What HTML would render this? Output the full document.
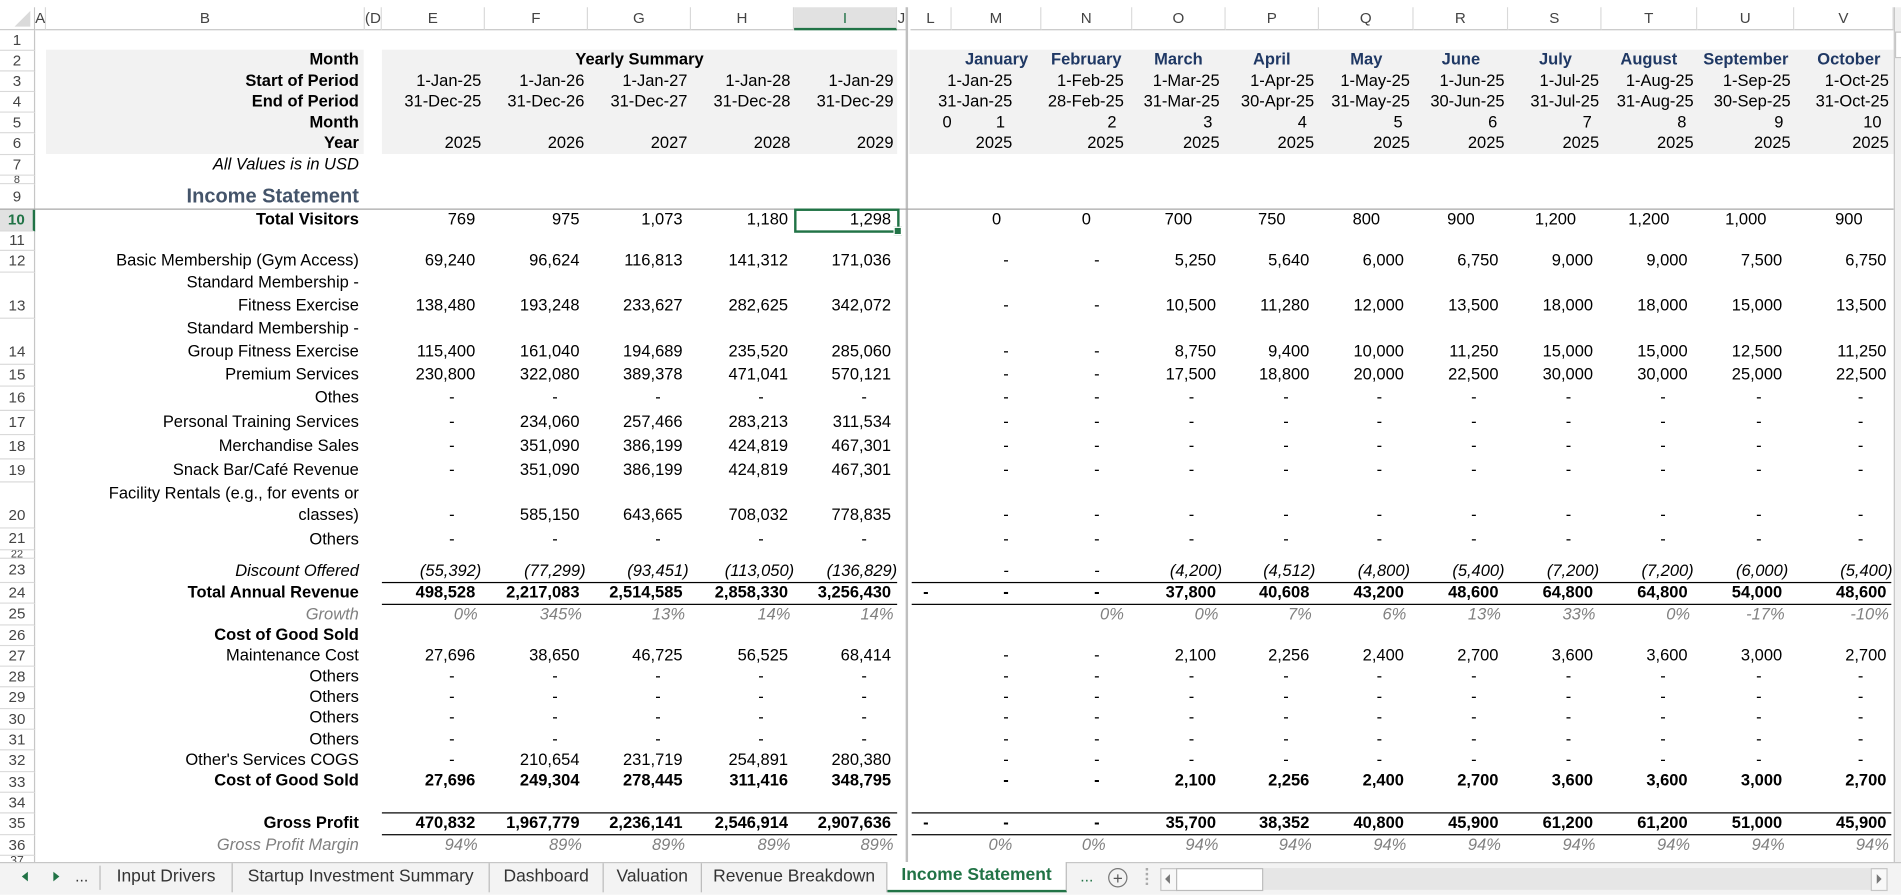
<!DOCTYPE html>
<html><head><meta charset="utf-8">
<style>
html,body{margin:0;padding:0;background:#fff;width:1901px;height:893px;overflow:hidden}
#w{position:absolute;left:0;top:0;width:1568px;height:737px;transform:scale(1.21237);transform-origin:0 0;font-family:"Liberation Sans",Arial,sans-serif;font-size:12px;color:#000}
.a{position:absolute}
.r{position:absolute;left:0;width:1568px;height:17px;font-size:13.6px}
.r span{position:absolute;left:0;top:0;text-align:right;white-space:nowrap;line-height:17px}
.b{font-weight:bold}.it{font-style:italic}.gy{color:#808080}
.nv{color:#1f3864;font-weight:bold}
.cB{width:296px}
.cE{width:392px}.cF{width:478px}.cG{width:563px}.cH{width:650px}.cI{width:735px}
.dE{width:375px}.dF{width:460px}.dG{width:545px}.dH{width:630px}.dI{width:715px}
.cO{width:1003px}.cP{width:1080px}.cQ{width:1158px}.cR{width:1236px}.cS{width:1314px}.cT{width:1392px}.cU{width:1470px}.cV{width:1556px}
.dL{width:766px}.dM{width:832px}.dN{width:907px}.dO{width:985px}.dP{width:1063px}.dQ{width:1140px}.dR{width:1218px}.dS{width:1296px}.dT{width:1374px}.dU{width:1453px}.dV{width:1537px}
.tE{width:397px}.tF{width:482px}.tG{width:567px}.tH{width:652px}.tI{width:737px}
.tM{width:835px}.tN{width:927px}.tO{width:1006px}.tP{width:1084px}.tQ{width:1163px}.tR{width:1241px}.tS{width:1319px}.tT{width:1397px}.tU{width:1477px}.tV{width:1558px}
.r span.ct{text-align:center;width:90px}
.pp{transform:translateX(5px)}.pc{transform:translateX(2px)}.mn{transform:translateX(-6px)}
.rh{position:absolute;left:0;width:28px;border-bottom:1px solid #d9d9d9;border-right:1px solid #c6c6c6;text-align:center;color:#444;font-size:12.5px;background:#fff;overflow:hidden}
.ch{position:absolute;top:6px;height:18px;line-height:18px;text-align:center;color:#444;border-right:1px solid #d9d9d9;font-size:12.5px;border-bottom:1px solid #c6c6c6;background:#fff}
.tab{position:absolute;top:712px;height:24px;line-height:22px;font-size:14.4px;color:#333;border-right:1px solid #bbb;text-align:center;white-space:nowrap}
</style></head><body><div id="w">

<div class="a" style="left:38px;top:41px;width:262px;height:86px;background:#f2f2f2"></div>
<div class="a" style="left:315px;top:41px;width:425px;height:86px;background:#f2f2f2"></div>
<div class="a" style="left:750px;top:41px;width:812px;height:86px;background:#f2f2f2"></div>

<div class="a" style="left:0;top:6px;width:28px;height:18px;border-right:1px solid #c6c6c6;border-bottom:1px solid #c6c6c6"></div>
<div class="a" style="left:12px;top:9px;width:0;height:0;border-left:13px solid transparent;border-bottom:13px solid #dadada"></div>
<div class="ch" style="left:29px;width:8px">A</div>
<div class="ch" style="left:38px;width:262px">B</div>
<div class="ch" style="left:301px;width:13px">(D</div>
<div class="ch" style="left:315px;width:84px">E</div>
<div class="ch" style="left:400px;width:84px">F</div>
<div class="ch" style="left:485px;width:84px">G</div>
<div class="ch" style="left:570px;width:84px">H</div>
<div class="ch" style="left:655px;width:84px;background:#e1e1e1;color:#217346;border-bottom:2px solid #217346;height:17px">I</div>
<div class="ch" style="left:740px;width:7px">J</div>
<div class="ch" style="left:751px;width:33px">L</div>
<div class="ch" style="left:785px;width:73px">M</div>
<div class="ch" style="left:859px;width:74px">N</div>
<div class="ch" style="left:934px;width:76px">O</div>
<div class="ch" style="left:1011px;width:76px">P</div>
<div class="ch" style="left:1088px;width:77px">Q</div>
<div class="ch" style="left:1166px;width:77px">R</div>
<div class="ch" style="left:1244px;width:76px">S</div>
<div class="ch" style="left:1321px;width:78px">T</div>
<div class="ch" style="left:1400px;width:79px">U</div>
<div class="ch" style="left:1480px;width:81px">V</div>

<div class="rh" style="top:25px;height:16px;line-height:16px">1</div>
<div class="rh" style="top:42px;height:16px;line-height:16px">2</div>
<div class="rh" style="top:59px;height:16px;line-height:16px">3</div>
<div class="rh" style="top:76px;height:16px;line-height:16px">4</div>
<div class="rh" style="top:93px;height:16px;line-height:16px">5</div>
<div class="rh" style="top:110px;height:17px;line-height:17px">6</div>
<div class="rh" style="top:128px;height:16px;line-height:16px">7</div>
<div class="rh" style="top:145px;height:6px;line-height:6px;font-size:9px">8</div>
<div class="rh" style="top:152px;height:20px;line-height:20px">9</div>
<div class="rh" style="top:173px;height:17px;line-height:17px;background:#e1e1e1;color:#217346;font-weight:bold;border-right:2px solid #217346;width:27px">10</div>
<div class="rh" style="top:191px;height:15px;line-height:15px">11</div>
<div class="rh" style="top:207px;height:17px;line-height:17px">12</div>
<div class="rh" style="top:225px;height:37px;line-height:54px">13</div>
<div class="rh" style="top:263px;height:37px;line-height:54px">14</div>
<div class="rh" style="top:301px;height:17px;line-height:17px">15</div>
<div class="rh" style="top:319px;height:19px;line-height:19px">16</div>
<div class="rh" style="top:339px;height:19px;line-height:19px">17</div>
<div class="rh" style="top:359px;height:19px;line-height:19px">18</div>
<div class="rh" style="top:379px;height:18px;line-height:18px">19</div>
<div class="rh" style="top:398px;height:37px;line-height:54px">20</div>
<div class="rh" style="top:436px;height:17px;line-height:17px">21</div>
<div class="rh" style="top:454px;height:6px;line-height:6px;font-size:9px">22</div>
<div class="rh" style="top:461px;height:19px;line-height:19px">23</div>
<div class="rh" style="top:481px;height:16px;line-height:16px">24</div>
<div class="rh" style="top:498px;height:17px;line-height:17px">25</div>
<div class="rh" style="top:516px;height:16px;line-height:16px">26</div>
<div class="rh" style="top:533px;height:16px;line-height:16px">27</div>
<div class="rh" style="top:550px;height:16px;line-height:16px">28</div>
<div class="rh" style="top:567px;height:17px;line-height:17px">29</div>
<div class="rh" style="top:585px;height:16px;line-height:16px">30</div>
<div class="rh" style="top:602px;height:16px;line-height:16px">31</div>
<div class="rh" style="top:619px;height:17px;line-height:17px">32</div>
<div class="rh" style="top:637px;height:16px;line-height:16px">33</div>
<div class="rh" style="top:654px;height:16px;line-height:16px">34</div>
<div class="rh" style="top:671px;height:17px;line-height:17px">35</div>
<div class="rh" style="top:689px;height:16px;line-height:16px">36</div>
<div class="rh" style="top:706px;height:6px;line-height:10px;font-size:10px">37</div>

<div class="a" style="left:747px;top:6px;width:2px;height:706px;background:#bfbfbf"></div>
<div class="a" style="left:0;top:172px;width:1562px;height:1px;background:#a6a6a6"></div>
<div class="a" style="left:1562px;top:6px;width:6px;height:706px;background:#f0f0f0;border-left:1px solid #c6c6c6"></div>
<div class="a" style="left:1563px;top:26px;width:5px;height:20px;border:1px solid #c6c6c6;background:#fff"></div>

<div class="r" style="top:40px"><span class="cB b">Month</span><span class="b" style="left:315px;width:425px;text-align:center">Yearly Summary</span>
<span class="ct nv" style="left:777px">January</span><span class="ct nv" style="left:851px">February</span><span class="ct nv" style="left:927px">March</span><span class="ct nv" style="left:1004px">April</span><span class="ct nv" style="left:1082px">May</span><span class="ct nv" style="left:1160px">June</span><span class="ct nv" style="left:1238px">July</span><span class="ct nv" style="left:1315px">August</span><span class="ct nv" style="left:1395px">September</span><span class="ct nv" style="left:1480px">October</span></div>
<div class="r" style="top:58px"><span class="cB b">Start of Period</span><span class="tE">1-Jan-25</span><span class="tF">1-Jan-26</span><span class="tG">1-Jan-27</span><span class="tH">1-Jan-28</span><span class="tI">1-Jan-29</span>
<span class="tM">1-Jan-25</span><span class="tN">1-Feb-25</span><span class="tO">1-Mar-25</span><span class="tP">1-Apr-25</span><span class="tQ">1-May-25</span><span class="tR">1-Jun-25</span><span class="tS">1-Jul-25</span><span class="tT">1-Aug-25</span><span class="tU">1-Sep-25</span><span class="tV">1-Oct-25</span></div>
<div class="r" style="top:75px"><span class="cB b">End of Period</span><span class="tE">31-Dec-25</span><span class="tF">31-Dec-26</span><span class="tG">31-Dec-27</span><span class="tH">31-Dec-28</span><span class="tI">31-Dec-29</span>
<span class="tM">31-Jan-25</span><span class="tN">28-Feb-25</span><span class="tO">31-Mar-25</span><span class="tP">30-Apr-25</span><span class="tQ">31-May-25</span><span class="tR">30-Jun-25</span><span class="tS">31-Jul-25</span><span class="tT">31-Aug-25</span><span class="tU">30-Sep-25</span><span class="tV">31-Oct-25</span></div>
<div class="r" style="top:92px"><span class="cB b">Month</span><span style="width:785px">0</span>
<span class="tM mn">1</span><span class="tN mn">2</span><span class="tO mn">3</span><span class="tP mn">4</span><span class="tQ mn">5</span><span class="tR mn">6</span><span class="tS mn">7</span><span class="tT mn">8</span><span class="tU mn">9</span><span class="tV mn">10</span></div>
<div class="r" style="top:109px"><span class="cB b">Year</span><span class="tE">2025</span><span class="tF">2026</span><span class="tG">2027</span><span class="tH">2028</span><span class="tI">2029</span>
<span class="tM">2025</span><span class="tN">2025</span><span class="tO">2025</span><span class="tP">2025</span><span class="tQ">2025</span><span class="tR">2025</span><span class="tS">2025</span><span class="tT">2025</span><span class="tU">2025</span><span class="tV">2025</span></div>
<div class="r" style="top:127px"><span class="cB it">All Values is in USD</span></div>
<div class="r" style="top:152px;height:20px"><span class="cB b" style="font-size:16.5px;color:#44546a;line-height:20px">Income Statement</span></div>

<div class="a" style="left:655px;top:172px;width:83px;height:16px;border:2px solid #217346"></div>
<div class="a" style="left:737px;top:187px;width:5px;height:5px;background:#217346;border:1px solid #fff"></div>

<div class="r" style="top:172px"><span class="cB b">Total Visitors</span><span class="cE">769</span><span class="cF">975</span><span class="cG">1,073</span><span class="cH">1,180</span><span class="cI">1,298</span>
<span class="ct" style="left:777px">0</span><span class="ct" style="left:851px">0</span><span class="ct" style="left:927px">700</span><span class="ct" style="left:1004px">750</span><span class="ct" style="left:1082px">800</span><span class="ct" style="left:1160px">900</span><span class="ct" style="left:1238px">1,200</span><span class="ct" style="left:1315px">1,200</span><span class="ct" style="left:1395px">1,000</span><span class="ct" style="left:1480px">900</span></div>

<div class="r" style="top:206px"><span class="cB">Basic Membership (Gym Access)</span><span class="cE">69,240</span><span class="cF">96,624</span><span class="cG">116,813</span><span class="cH">141,312</span><span class="cI">171,036</span>
<span class="dM">-</span><span class="dN">-</span><span class="cO">5,250</span><span class="cP">5,640</span><span class="cQ">6,000</span><span class="cR">6,750</span><span class="cS">9,000</span><span class="cT">9,000</span><span class="cU">7,500</span><span class="cV">6,750</span></div>

<div class="r" style="top:224px"><span class="cB">Standard Membership -</span></div>
<div class="r" style="top:243px"><span class="cB">Fitness Exercise</span><span class="cE">138,480</span><span class="cF">193,248</span><span class="cG">233,627</span><span class="cH">282,625</span><span class="cI">342,072</span>
<span class="dM">-</span><span class="dN">-</span><span class="cO">10,500</span><span class="cP">11,280</span><span class="cQ">12,000</span><span class="cR">13,500</span><span class="cS">18,000</span><span class="cT">18,000</span><span class="cU">15,000</span><span class="cV">13,500</span></div>

<div class="r" style="top:262px"><span class="cB">Standard Membership -</span></div>
<div class="r" style="top:281px"><span class="cB">Group Fitness Exercise</span><span class="cE">115,400</span><span class="cF">161,040</span><span class="cG">194,689</span><span class="cH">235,520</span><span class="cI">285,060</span>
<span class="dM">-</span><span class="dN">-</span><span class="cO">8,750</span><span class="cP">9,400</span><span class="cQ">10,000</span><span class="cR">11,250</span><span class="cS">15,000</span><span class="cT">15,000</span><span class="cU">12,500</span><span class="cV">11,250</span></div>

<div class="r" style="top:300px"><span class="cB">Premium Services</span><span class="cE">230,800</span><span class="cF">322,080</span><span class="cG">389,378</span><span class="cH">471,041</span><span class="cI">570,121</span>
<span class="dM">-</span><span class="dN">-</span><span class="cO">17,500</span><span class="cP">18,800</span><span class="cQ">20,000</span><span class="cR">22,500</span><span class="cS">30,000</span><span class="cT">30,000</span><span class="cU">25,000</span><span class="cV">22,500</span></div>

<div class="r" style="top:319px"><span class="cB">Othes</span><span class="dE">-</span><span class="dF">-</span><span class="dG">-</span><span class="dH">-</span><span class="dI">-</span>
<span class="dM">-</span><span class="dN">-</span><span class="dO">-</span><span class="dP">-</span><span class="dQ">-</span><span class="dR">-</span><span class="dS">-</span><span class="dT">-</span><span class="dU">-</span><span class="dV">-</span></div>

<div class="r" style="top:339px"><span class="cB">Personal Training Services</span><span class="dE">-</span><span class="cF">234,060</span><span class="cG">257,466</span><span class="cH">283,213</span><span class="cI">311,534</span>
<span class="dM">-</span><span class="dN">-</span><span class="dO">-</span><span class="dP">-</span><span class="dQ">-</span><span class="dR">-</span><span class="dS">-</span><span class="dT">-</span><span class="dU">-</span><span class="dV">-</span></div>

<div class="r" style="top:359px"><span class="cB">Merchandise Sales</span><span class="dE">-</span><span class="cF">351,090</span><span class="cG">386,199</span><span class="cH">424,819</span><span class="cI">467,301</span>
<span class="dM">-</span><span class="dN">-</span><span class="dO">-</span><span class="dP">-</span><span class="dQ">-</span><span class="dR">-</span><span class="dS">-</span><span class="dT">-</span><span class="dU">-</span><span class="dV">-</span></div>

<div class="r" style="top:379px"><span class="cB">Snack Bar/Café Revenue</span><span class="dE">-</span><span class="cF">351,090</span><span class="cG">386,199</span><span class="cH">424,819</span><span class="cI">467,301</span>
<span class="dM">-</span><span class="dN">-</span><span class="dO">-</span><span class="dP">-</span><span class="dQ">-</span><span class="dR">-</span><span class="dS">-</span><span class="dT">-</span><span class="dU">-</span><span class="dV">-</span></div>

<div class="r" style="top:398px"><span class="cB">Facility Rentals (e.g., for events or</span></div>
<div class="r" style="top:416px"><span class="cB">classes)</span><span class="dE">-</span><span class="cF">585,150</span><span class="cG">643,665</span><span class="cH">708,032</span><span class="cI">778,835</span>
<span class="dM">-</span><span class="dN">-</span><span class="dO">-</span><span class="dP">-</span><span class="dQ">-</span><span class="dR">-</span><span class="dS">-</span><span class="dT">-</span><span class="dU">-</span><span class="dV">-</span></div>

<div class="r" style="top:436px"><span class="cB">Others</span><span class="dE">-</span><span class="dF">-</span><span class="dG">-</span><span class="dH">-</span><span class="dI">-</span>
<span class="dM">-</span><span class="dN">-</span><span class="dO">-</span><span class="dP">-</span><span class="dQ">-</span><span class="dR">-</span><span class="dS">-</span><span class="dT">-</span><span class="dU">-</span><span class="dV">-</span></div>

<div class="r it" style="top:462px"><span class="cB">Discount Offered</span><span class="cE pp">(55,392)</span><span class="cF pp">(77,299)</span><span class="cG pp">(93,451)</span><span class="cH pp">(113,050)</span><span class="cI pp">(136,829)</span>
<span class="dM">-</span><span class="dN">-</span><span class="cO pp">(4,200)</span><span class="cP pp">(4,512)</span><span class="cQ pp">(4,800)</span><span class="cR pp">(5,400)</span><span class="cS pp">(7,200)</span><span class="cT pp">(7,200)</span><span class="cU pp">(6,000)</span><span class="cV pp">(5,400)</span></div>

<div class="a" style="left:315px;top:480px;width:425px;height:17px;border-top:1px solid #000;border-bottom:1px solid #000"></div>
<div class="a" style="left:752px;top:480px;width:808px;height:17px;border-top:1px solid #000;border-bottom:1px solid #000"></div>
<div class="r b" style="top:480px"><span class="cB">Total Annual Revenue</span><span class="cE">498,528</span><span class="cF">2,217,083</span><span class="cG">2,514,585</span><span class="cH">2,858,330</span><span class="cI">3,256,430</span>
<span class="dL">-</span><span class="dM">-</span><span class="dN">-</span><span class="cO">37,800</span><span class="cP">40,608</span><span class="cQ">43,200</span><span class="cR">48,600</span><span class="cS">64,800</span><span class="cT">64,800</span><span class="cU">54,000</span><span class="cV">48,600</span></div>

<div class="r it gy" style="top:498px"><span class="cB">Growth</span><span class="cE pc">0%</span><span class="cF pc">345%</span><span class="cG pc">13%</span><span class="cH pc">14%</span><span class="cI pc">14%</span>
<span class="tN">0%</span><span class="cO pc">0%</span><span class="cP pc">7%</span><span class="cQ pc">6%</span><span class="cR pc">13%</span><span class="cS pc">33%</span><span class="cT pc">0%</span><span class="cU pc">-17%</span><span class="cV pc">-10%</span></div>

<div class="r b" style="top:515px"><span class="cB">Cost of Good Sold</span></div>

<div class="r" style="top:532px"><span class="cB">Maintenance Cost</span><span class="cE">27,696</span><span class="cF">38,650</span><span class="cG">46,725</span><span class="cH">56,525</span><span class="cI">68,414</span>
<span class="dM">-</span><span class="dN">-</span><span class="cO">2,100</span><span class="cP">2,256</span><span class="cQ">2,400</span><span class="cR">2,700</span><span class="cS">3,600</span><span class="cT">3,600</span><span class="cU">3,000</span><span class="cV">2,700</span></div>

<div class="r" style="top:549px"><span class="cB">Others</span><span class="dE">-</span><span class="dF">-</span><span class="dG">-</span><span class="dH">-</span><span class="dI">-</span>
<span class="dM">-</span><span class="dN">-</span><span class="dO">-</span><span class="dP">-</span><span class="dQ">-</span><span class="dR">-</span><span class="dS">-</span><span class="dT">-</span><span class="dU">-</span><span class="dV">-</span></div>
<div class="r" style="top:566px"><span class="cB">Others</span><span class="dE">-</span><span class="dF">-</span><span class="dG">-</span><span class="dH">-</span><span class="dI">-</span>
<span class="dM">-</span><span class="dN">-</span><span class="dO">-</span><span class="dP">-</span><span class="dQ">-</span><span class="dR">-</span><span class="dS">-</span><span class="dT">-</span><span class="dU">-</span><span class="dV">-</span></div>
<div class="r" style="top:583px"><span class="cB">Others</span><span class="dE">-</span><span class="dF">-</span><span class="dG">-</span><span class="dH">-</span><span class="dI">-</span>
<span class="dM">-</span><span class="dN">-</span><span class="dO">-</span><span class="dP">-</span><span class="dQ">-</span><span class="dR">-</span><span class="dS">-</span><span class="dT">-</span><span class="dU">-</span><span class="dV">-</span></div>
<div class="r" style="top:601px"><span class="cB">Others</span><span class="dE">-</span><span class="dF">-</span><span class="dG">-</span><span class="dH">-</span><span class="dI">-</span>
<span class="dM">-</span><span class="dN">-</span><span class="dO">-</span><span class="dP">-</span><span class="dQ">-</span><span class="dR">-</span><span class="dS">-</span><span class="dT">-</span><span class="dU">-</span><span class="dV">-</span></div>

<div class="r" style="top:618px"><span class="cB">Other's Services COGS</span><span class="dE">-</span><span class="cF">210,654</span><span class="cG">231,719</span><span class="cH">254,891</span><span class="cI">280,380</span>
<span class="dM">-</span><span class="dN">-</span><span class="dO">-</span><span class="dP">-</span><span class="dQ">-</span><span class="dR">-</span><span class="dS">-</span><span class="dT">-</span><span class="dU">-</span><span class="dV">-</span></div>

<div class="r b" style="top:635px"><span class="cB">Cost of Good Sold</span><span class="cE">27,696</span><span class="cF">249,304</span><span class="cG">278,445</span><span class="cH">311,416</span><span class="cI">348,795</span>
<span class="dM">-</span><span class="dN">-</span><span class="cO">2,100</span><span class="cP">2,256</span><span class="cQ">2,400</span><span class="cR">2,700</span><span class="cS">3,600</span><span class="cT">3,600</span><span class="cU">3,000</span><span class="cV">2,700</span></div>

<div class="a" style="left:315px;top:670px;width:425px;height:17px;border-top:1px solid #000;border-bottom:1px solid #000"></div>
<div class="a" style="left:752px;top:670px;width:808px;height:17px;border-top:1px solid #000;border-bottom:1px solid #000"></div>
<div class="r b" style="top:670px"><span class="cB">Gross Profit</span><span class="cE">470,832</span><span class="cF">1,967,779</span><span class="cG">2,236,141</span><span class="cH">2,546,914</span><span class="cI">2,907,636</span>
<span class="dL">-</span><span class="dM">-</span><span class="dN">-</span><span class="cO">35,700</span><span class="cP">38,352</span><span class="cQ">40,800</span><span class="cR">45,900</span><span class="cS">61,200</span><span class="cT">61,200</span><span class="cU">51,000</span><span class="cV">45,900</span></div>

<div class="r it gy" style="top:688px"><span class="cB">Gross Profit Margin</span><span class="cE pc">94%</span><span class="cF pc">89%</span><span class="cG pc">89%</span><span class="cH pc">89%</span><span class="cI pc">89%</span>
<span class="tM">0%</span><span class="dN" style="width:912px">0%</span><span class="cO pc">94%</span><span class="cP pc">94%</span><span class="cQ pc">94%</span><span class="cR pc">94%</span><span class="cS pc">94%</span><span class="cT pc">94%</span><span class="cU pc">94%</span><span class="cV pc">94%</span></div>

<div class="a" style="left:0;top:711px;width:1568px;height:26px;background:#f3f3f3;border-top:1px solid #c6c6c6"></div>
<div class="a" style="left:18px;top:719px;width:0;height:0;border-top:4px solid transparent;border-bottom:4px solid transparent;border-right:5px solid #217346"></div>
<div class="a" style="left:44px;top:719px;width:0;height:0;border-top:4px solid transparent;border-bottom:4px solid transparent;border-left:5px solid #217346"></div>
<div class="a" style="left:62px;top:712px;line-height:22px;font-size:13px;color:#333">...</div>
<div class="a" style="left:82px;top:714px;width:1px;height:20px;background:#bbb"></div>
<div class="tab" style="left:83px;width:108px">Input Drivers</div>
<div class="tab" style="left:192px;width:211px">Startup Investment Summary</div>
<div class="tab" style="left:404px;width:93px">Dashboard</div>
<div class="tab" style="left:498px;width:80px">Valuation</div>
<div class="tab" style="left:579px;width:152px">Revenue Breakdown</div>
<div class="tab" style="left:732px;width:147px;background:#fff;color:#217346;font-weight:bold;border-bottom:2px solid #217346;height:23px;border-right:1px solid #bbb;top:711px">Income Statement</div>
<div class="a" style="left:891px;top:712px;line-height:22px;font-size:13px;color:#217346">...</div>
<div class="a" style="left:914px;top:716px;width:14px;height:14px;border:1px solid #777;border-radius:50%;text-align:center;line-height:14px;font-size:14px;color:#555">+</div>
<div class="a" style="left:945px;top:716px;width:2px;height:14px;border-left:2px dotted #aaa"></div>
<div class="a" style="left:957px;top:716px;width:598px;height:18px;background:#e6e6e6"></div>
<div class="a" style="left:957px;top:716px;width:12px;height:17px;border:1px solid #c6c6c6;background:#f8f8f8"></div>
<div class="a" style="left:961px;top:721px;width:0;height:0;border-top:4px solid transparent;border-bottom:4px solid transparent;border-right:4px solid #777"></div>
<div class="a" style="left:970px;top:716px;width:70px;height:17px;border:1px solid #bbb;background:#fff"></div>
<div class="a" style="left:1543px;top:716px;width:12px;height:17px;border:1px solid #c6c6c6;background:#f8f8f8"></div>
<div class="a" style="left:1548px;top:721px;width:0;height:0;border-top:4px solid transparent;border-bottom:4px solid transparent;border-left:4px solid #777"></div>

</div></body></html>
